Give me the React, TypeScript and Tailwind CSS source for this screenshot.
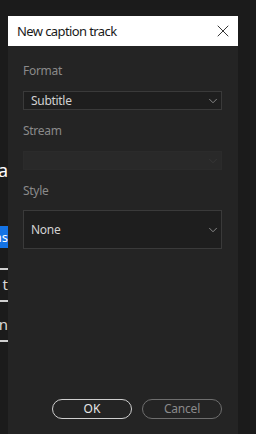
import { ChevronDown, X } from "lucide-react";

const font = { fontFamily: '"Noto Sans", "Noto Sans CJK KR", sans-serif' };

function Select({ value, tall, disabled }: { value?: string; tall?: boolean; disabled?: boolean }) {
  return (
    <div
      className={
        "flex items-center justify-between pl-[7px] pr-[1px] " +
        (tall ? "h-[39px] " : "h-[19px] ") +
        (disabled
          ? "bg-[#292929] border border-[#2b2b2b]"
          : "bg-[#1e1e1e] border border-[#3a3a3a]")
      }
    >
      <span className="text-[12px] leading-none tracking-[-0.3px] text-[#d2d2d2]">{value}</span>
      <ChevronDown
        className={"h-[14px] w-[14px] " + (disabled ? "text-[#3a3a3a]" : "text-[#a8a8a8]")}
        strokeWidth={1.3}
      />
    </div>
  );
}

export default function App() {
  return (
    <div className="flex h-[434px] w-[256px] overflow-hidden bg-[#1b1b1b]" style={font}>
      {/* Page behind the dialog */}
      <div className="w-[8px] shrink-0 overflow-hidden">
        <div className="flex w-[8px] flex-col items-end pt-[160px]">
          <span className="text-[18px] leading-[20px] text-white">a</span>
          <div className="mt-[46px] flex h-[22px] w-[8px] items-center justify-end overflow-hidden bg-[#1473e6]">
            <span className="text-[13px] leading-none text-white">ns</span>
          </div>
          <div className="mt-[20px] h-[2px] w-[8px] bg-[#cfcfcf]" />
          <span className="mt-[6px] text-[15px] leading-[16px] text-[#d8d8d8]">t</span>
          <div className="mt-[8px] h-[2px] w-[8px] bg-[#cfcfcf]" />
          <span className="mt-[14px] text-[15px] leading-[16px] text-[#d8d8d8]">n</span>
          <div className="mt-[8px] h-[2px] w-[8px] bg-[#cfcfcf]" />
        </div>
      </div>

      {/* Dialog */}
      <div className="mt-[16px] flex w-[230px] shrink-0 flex-col bg-[#242424]">
        <div className="flex h-[30px] items-center justify-between bg-white pl-[9px] pr-[5px]">
          <span className="text-[13px] leading-none tracking-[-0.6px] text-[#1a1a1a]">
            New caption track
          </span>
          <X className="h-[20px] w-[20px] text-[#222]" strokeWidth={1.1} />
        </div>

        <div className="flex flex-1 flex-col pl-[15px] pr-[16px]">
          <div className="mt-[19px] text-[12px] leading-[12px] tracking-[-0.3px] text-[#8a8a8a]">Format</div>
          <div className="mt-[14px]">
            <Select value="Subtitle" />
          </div>

          <div className="mt-[15px] text-[12px] leading-[12px] tracking-[-0.3px] text-[#8a8a8a]">Stream</div>
          <div className="mt-[14px]">
            <Select disabled />
          </div>

          <div className="mt-[15px] text-[12px] leading-[12px] tracking-[-0.3px] text-[#8a8a8a]">Style</div>
          <div className="mt-[13px]">
            <Select value="None" tall />
          </div>

          <div className="mt-auto mb-[15px] flex justify-end gap-[10px]">
            <button className="h-[20px] w-[80px] rounded-full border border-[#cfcfcf] text-[12px] leading-none text-[#e6e6e6]">
              OK
            </button>
            <button className="h-[20px] w-[80px] rounded-full border border-[#6e6e6e] text-[12px] leading-none tracking-[-0.2px] text-[#8a8a8a]">
              Cancel
            </button>
          </div>
        </div>
      </div>

      <div className="flex-1" />
    </div>
  );
}
